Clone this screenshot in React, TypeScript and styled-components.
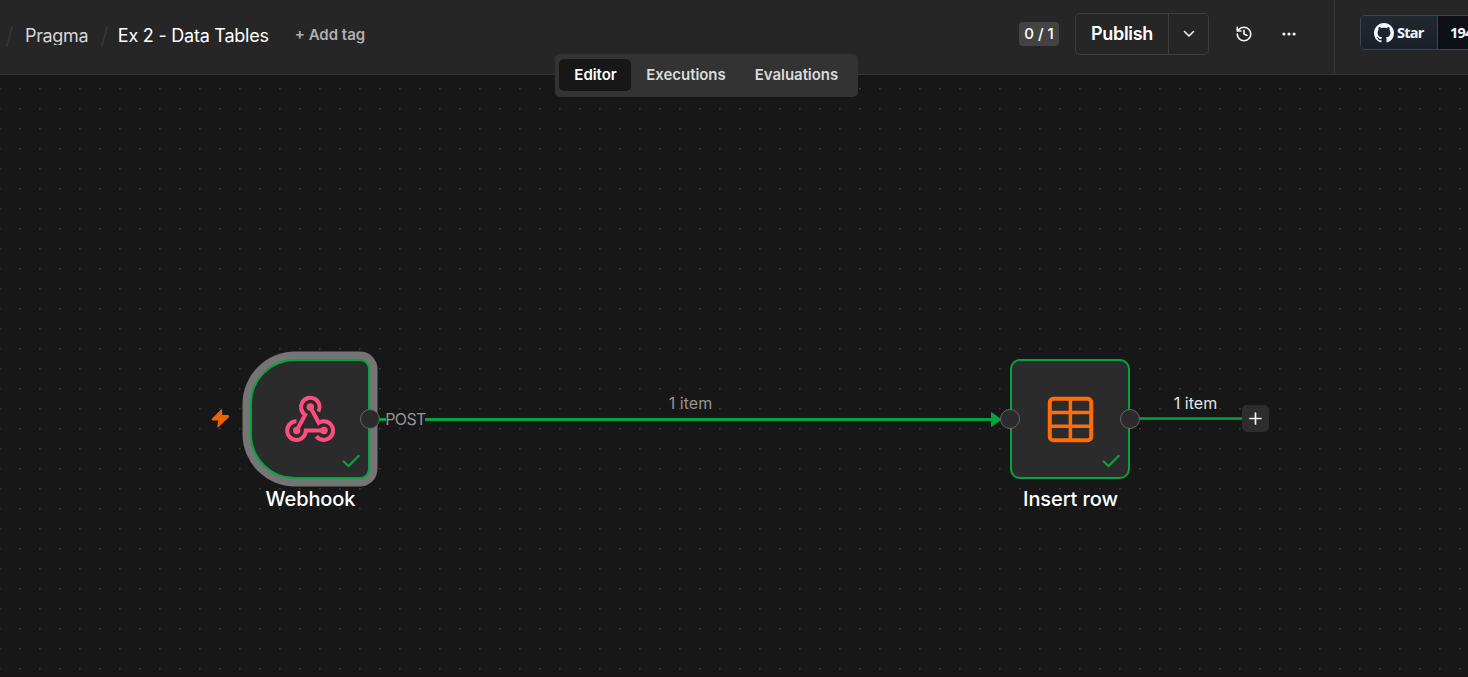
import React from 'react';
import styled, { createGlobalStyle } from 'styled-components';

const Global = createGlobalStyle`
  * { box-sizing: border-box; }
  body { margin: 0; background: #171717; font-family: Inter, sans-serif; color: #fff; overflow: hidden; }
`;
const Page = styled.div`
  position: relative; width: 1468px; height: 677px; overflow: hidden;
  display: flex; flex-direction: column;
`;
const Header = styled.header`
  height: 75px; flex: none; display: flex; background: #262626;
  border-bottom: 1px solid #363636; overflow: hidden;
`;
const Crumbs = styled.nav`
  display: flex; align-items: center; height: 70px; padding-left: 5px; flex: 1;
`;
const Slash = styled.svg`
  display: block; width: 9px; height: 23px; fill: none; stroke: #363636; stroke-width: 1.6; flex: none; margin-top: 2px;
`;
const Crumb = styled.span<{ $gap: string; $current?: boolean }>`
  font-size: 18px; line-height: 24px; white-space: nowrap;
  margin: ${p => p.$gap}; color: ${p => (p.$current ? '#fff' : '#d6d6d6')};
  letter-spacing: ${p => (p.$current ? '-0.23px' : '-0.35px')};
  padding-top: ${p => (p.$current ? '2px' : '0')};
`;
const Folder = styled(Crumb)`
  height: 19px; line-height: 19px; overflow: hidden;
`;
const AddTag = styled.span`
  font-size: 15px; font-weight: 600; color: #b0b0b0; margin-left: 26px; white-space: nowrap;
  padding-bottom: 1px;
`;
const Actions = styled.div`
  display: flex; align-items: center; height: 68px; width: 315px; flex: none;
`;
const Count = styled.span`
  width: 40px; height: 24px; border-radius: 4px; background: #434343;
  font-size: 15px; font-weight: 500; line-height: 24px; text-align: center; white-space: nowrap;
`;
const Split = styled.div`
  display: flex; width: 134px; height: 42px; margin-left: 16px;
  border: 1px solid #3e3e3e; border-radius: 5px;
`;
const Publish = styled.button`
  width: 93px; padding: 0; border: 0; border-right: 1px solid #3e3e3e; background: none;
  color: #fff; font: 600 18px/40px Inter, sans-serif; letter-spacing: -0.3px;
`;
const Caret = styled.button`
  flex: 1; padding: 0; border: 0; background: none; display: grid; place-items: center;
`;
const IconBox = styled.div<{ $left: number }>`
  width: 20px; height: 20px; margin-left: ${p => p.$left}px; display: grid; place-items: center;
`;
const Line = styled.svg`
  display: block; fill: none; stroke: #f2f2f2; stroke-linecap: round; stroke-linejoin: round;
`;
const GitHub = styled.div`
  width: 134px; flex: none; border-left: 1px solid #363636; padding: 15px 0 0 25px;
`;
const StarButton = styled.div`
  display: flex; width: 150px; height: 35px; border: 1px solid #3d444d; border-radius: 5px;
  font: 700 14.5px/33px "Open Sans", sans-serif; color: #f0f6fc; overflow: hidden;
  letter-spacing: -0.8px;
`;
const StarLabel = styled.div`
  display: flex; align-items: center; gap: 3px; width: 77px; padding-left: 13px; flex: none;
  background: linear-gradient(#212830, #1a2027); border-right: 1px solid #3d444d;
`;
const StarCount = styled.div`
  flex: 1; padding-left: 12px; background: #0d1117;
`;
const Tabs = styled.div`
  position: absolute; z-index: 2; left: 554.5px; top: 54px; width: 303px; height: 42.5px; padding: 5px 4.5px;
  display: flex; border-radius: 5px; background: #333;
`;
const Tab = styled.div<{ $w: number; $active?: boolean }>`
  width: ${p => p.$w}px; height: 32px; border-radius: 5px; text-align: center; padding-left: 1px;
  font-size: 15px; font-weight: 600; line-height: 32px; letter-spacing: -0.05px;
  color: ${p => (p.$active ? '#fff' : '#dadada')};
  background: ${p => (p.$active ? '#171717' : 'transparent')};
`;
const Canvas = styled.main`
  position: relative; flex: 1; background: #171717; overflow: hidden;
`;
const Drawing = styled.svg`
  position: absolute; left: 0; top: 0; display: block;
`;
const Node = styled.div<{ $x: number; $trigger?: boolean }>`
  position: absolute; left: ${p => p.$x}px; top: 284px; width: 120px; height: 120px;
  background: #2b2b2b; border: 2px solid #07a33d;
  border-radius: ${p => (p.$trigger ? '45px 10px 10px 45px' : '10px')};
  box-shadow: ${p => (p.$trigger ? '0 0 0 7.5px #757575' : 'none')};
`;
const NodeName = styled.div<{ $x: number }>`
  position: absolute; left: ${p => p.$x}px; top: 411px; width: 160px; text-align: center;
  font-size: 20px; font-weight: 500; line-height: 26px; letter-spacing: -0.1px;
`;
const Handle = styled.div<{ $x: number }>`
  position: absolute; left: ${p => p.$x}px; top: 334px; width: 20px; height: 20px;
  border-radius: 50%; background: #2b2b2b; border: 1px solid #666;
`;
const EdgeLabel = styled.div<{ $x: number; $y: number; $w: number; $color: string; $tight?: boolean }>`
  position: absolute; left: ${p => p.$x}px; top: ${p => p.$y}px; width: ${p => p.$w}px;
  font-size: 16px; line-height: 20px; text-align: center; white-space: nowrap; color: ${p => p.$color};
  letter-spacing: ${p => (p.$tight ? '-0.6px' : '0')};
`;
const Plus = styled.button`
  position: absolute; left: 1242px; top: 330px; width: 27px; height: 27px; padding: 0; border: 0;
  border-radius: 5px; background: #2d2d2d; display: grid; place-items: center;
`;
const BottomLine = styled.div`
  position: absolute; left: 0; right: 0; bottom: 0; height: 1px; background: #1b1114;
`;

const GitHubMark = () => (
  <svg width="20" height="20" viewBox="0 0 16 16" fill="#f0f6fc">
    <path d="M8 0c4.42 0 8 3.58 8 8a8.013 8.013 0 0 1-5.45 7.59c-.4.08-.55-.17-.55-.38 0-.27.01-1.13.01-2.2 0-.75-.25-1.23-.54-1.48 1.78-.2 3.65-.88 3.65-3.95 0-.88-.31-1.59-.82-2.15.08-.2.36-1.02-.08-2.12 0 0-.67-.22-2.2.82-.64-.18-1.32-.27-2-.27-.68 0-1.36.09-2 .27-1.53-1.03-2.2-.82-2.2-.82-.44 1.1-.16 1.92-.08 2.12-.51.56-.82 1.28-.82 2.15 0 3.06 1.86 3.75 3.64 3.95-.23.2-.44.55-.51 1.07-.46.21-1.61.55-2.33-.66-.15-.24-.6-.83-1.23-.82-.67.01-.27.38.01.53.34.19.73.9.82 1.13.16.45.68 1.31 2.69.94 0 .67.01 1.3.01 1.49 0 .21-.15.45-.55.38A7.995 7.995 0 0 1 0 8c0-4.42 3.58-8 8-8Z" />
  </svg>
);

export default function App() {
  return (
    <Page>
      <Global />
      <Header>
        <Crumbs>
          <Slash viewBox="0 0 9 23"><path d="M7.5 1 1.5 22" /></Slash>
          <Folder $gap="0 11.6px 0 11px">Pragma</Folder>
          <Slash viewBox="0 0 9 23"><path d="M7.5 1 1.5 22" /></Slash>
          <Crumb $gap="0 0 0 9px" $current>Ex 2 - Data Tables</Crumb>
          <AddTag>+ Add tag</AddTag>
        </Crumbs>
        <Actions>
          <Count>0 / 1</Count>
          <Split>
            <Publish>Publish</Publish>
            <Caret aria-label="More publish options">
              <Line width="12" height="8" viewBox="0 0 12 8" strokeWidth="1.6"><path d="M1.5 1.5 6 6l4.5-4.5" /></Line>
            </Caret>
          </Split>
          <IconBox $left={24.5}>
            <Line width="18" height="18" viewBox="0 0 24 24" strokeWidth="2.2">
              <path d="M3 12a9 9 0 1 0 9-9 9.75 9.75 0 0 0-6.74 2.74L3 8M3 3v5h5M12 7v5l4 2" />
            </Line>
          </IconBox>
          <IconBox $left={25}>
            <svg width="16" height="6" viewBox="0 0 16 6" fill="#f2f2f2">
              <circle cx="2.9" cy="3" r="1.6" /><circle cx="8" cy="3" r="1.6" /><circle cx="13.1" cy="3" r="1.6" />
            </svg>
          </IconBox>
        </Actions>
        <GitHub>
          <StarButton>
            <StarLabel><GitHubMark />Star</StarLabel>
            <StarCount>194</StarCount>
          </StarButton>
        </GitHub>
      </Header>
      <Tabs>
        <Tab $w={72} $active>Editor</Tab>
        <Tab $w={109}>Executions</Tab>
        <Tab $w={112}>Evaluations</Tab>
      </Tabs>
      <Canvas>
        <Drawing width="1468" height="602" viewBox="0 75 1468 602">
          <defs>
            <pattern id="dots" width="20" height="20" x="19" y="88" patternUnits="userSpaceOnUse">
              <circle cx="0.9" cy="0.7" r="0.75" fill="#464646" />
            </pattern>
          </defs>
          <rect y="75" width="1468" height="602" fill="url(#dots)" />
        </Drawing>
        <Node $x={250} $trigger />
        <Node $x={1010} />
        <Drawing width="1468" height="602" viewBox="0 75 1468 602" fill="none">
          <path d="M379 419.5h7M425 419.5h568" stroke="#07a33d" strokeWidth="3" />
          <path d="M991.5 412.5v14l9.5-7z" fill="#07a33d" stroke="#07a33d" strokeLinejoin="round" />
          <path d="M1140 418.5h102" stroke="#07a33d" strokeWidth="2.5" />
          <path d="M221.5 409.8 212.5 418.9a.6.6 0 0 0 .4 1.1h6l-1 6.9 10.4-9.9a.8.8 0 0 0-.5-1.400h-6.200z" fill="#ea6409" stroke="#ea6409" strokeWidth="1.2" strokeLinejoin="round" />
          <g stroke="#ff4d7e" strokeWidth="4">
            <path d="M318.4 411.6A9.3 9.3 0 1 0 305.2 414.8L296.7 430.5" />
            <path d="M310.3 407l8.4 15.8a9.3 9.3 0 1 1-2.3 13.4" />
            <path d="M296.5 421.3a9.3 9.3 0 1 0 9.3 9.2h18.2" />
          </g>
          <g fill="#ff4d7e">
            <circle cx="310.3" cy="407" r="3.7" /><circle cx="296.7" cy="430.5" r="3.7" /><circle cx="324" cy="430.5" r="3.7" />
          </g>
          <g stroke="#ff6d0a" strokeWidth="4">
            <rect x="1049.8" y="398.8" width="41.4" height="41.4" rx="3.5" />
            <path d="M1070.4 399v41M1050 412.4h41M1050 426.2h41" strokeWidth="3.5" />
          </g>
          <path d="M343 461l5.5 5 10.8-10.8M1103 461l5.5 5 10.8-10.8" stroke="#07a33d" strokeWidth="2.2" />
        </Drawing>
        <Handle $x={360} />
        <Handle $x={1000} />
        <Handle $x={1120} />
        <EdgeLabel $x={380.5} $y={334} $w={50} $color="#949494" $tight>POST</EdgeLabel>
        <EdgeLabel $x={660} $y={318} $w={61} $color="#949494">1 item</EdgeLabel>
        <EdgeLabel $x={1165} $y={318} $w={61} $color="#e4e4e4">1 item</EdgeLabel>
        <Plus aria-label="Add node">
          <Line width="13" height="13" viewBox="0 0 13 13" strokeWidth="1.7"><path d="M1 6.5h11M6.5 1v11" /></Line>
        </Plus>
        <NodeName $x={230.5}>Webhook</NodeName>
        <NodeName $x={990.5}>Insert row</NodeName>
        <BottomLine />
      </Canvas>
    </Page>
  );
}
